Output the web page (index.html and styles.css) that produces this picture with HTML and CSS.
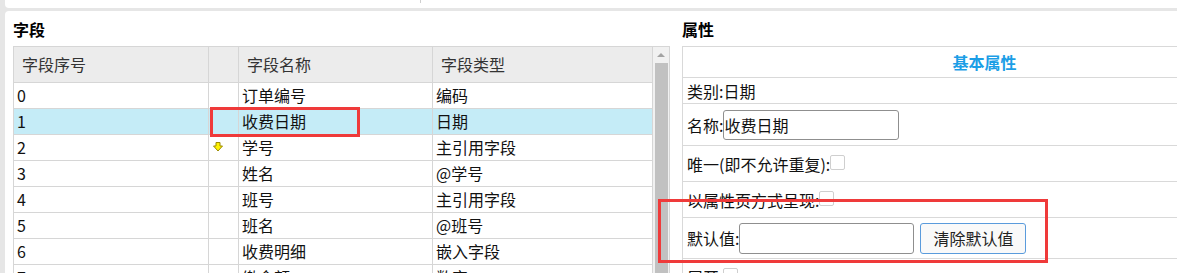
FILE: index.html
```html
<!DOCTYPE html>
<html>

<head>
    <meta charset="utf-8" />
    <title>字段属性</title>
    <meta name="viewport" content="width=device-width, initial-scale=1">
    <link rel="stylesheet" href="styles.css">
</head>

<body>
    <div class="topbar"><span class="topbar-sep"></span></div>

    <div class="main">

        <section class="fields">
            <h2 class="panel-title">字段</h2>
            <div class="grid">
                <div class="grid-body">
                    <div class="row head">
                        <div class="cell">字段序号</div>
                        <div class="cell"></div>
                        <div class="cell">字段名称</div>
                        <div class="cell">字段类型</div>
                    </div>
                    <div class="row">
                        <div class="cell">0</div>
                        <div class="cell"></div>
                        <div class="cell">订单编号</div>
                        <div class="cell">编码</div>
                    </div>
                    <div class="row selected">
                        <div class="cell">1</div>
                        <div class="cell"></div>
                        <div class="cell">收费日期</div>
                        <div class="cell">日期</div>
                    </div>
                    <div class="row">
                        <div class="cell">2</div>
                        <div class="cell icon-cell">
                            <svg width="10" height="10" viewBox="0 0 10 10">
                                <polygon points="3,0.5 7,0.5 7,4 9.5,4 5,9 0.5,4 3,4" fill="#fff200" stroke="#9c8b00" stroke-width="1" />
                            </svg>
                        </div>
                        <div class="cell">学号</div>
                        <div class="cell">主引用字段</div>
                    </div>
                    <div class="row">
                        <div class="cell">3</div>
                        <div class="cell"></div>
                        <div class="cell">姓名</div>
                        <div class="cell">@学号</div>
                    </div>
                    <div class="row">
                        <div class="cell">4</div>
                        <div class="cell"></div>
                        <div class="cell">班号</div>
                        <div class="cell">主引用字段</div>
                    </div>
                    <div class="row">
                        <div class="cell">5</div>
                        <div class="cell"></div>
                        <div class="cell">班名</div>
                        <div class="cell">@班号</div>
                    </div>
                    <div class="row">
                        <div class="cell">6</div>
                        <div class="cell"></div>
                        <div class="cell">收费明细</div>
                        <div class="cell">嵌入字段</div>
                    </div>
                    <div class="row">
                        <div class="cell">7</div>
                        <div class="cell"></div>
                        <div class="cell">缴金额</div>
                        <div class="cell">数字</div>
                    </div>
                </div>
                <div class="vscroll">
                    <span class="vscroll-up"></span>
                    <span class="vscroll-thumb"></span>
                </div>
            </div>
        </section>

        <section class="props">
            <h2 class="panel-title">属性</h2>
            <div class="prop-table">
                <div class="prop-head">基本属性</div>
                <div class="prop-row row-type">类别:日期</div>
                <div class="prop-row row-name">名称:<input class="text-input name-input" type="text" value="收费日期"></div>
                <div class="prop-row row-check">唯一(即不允许重复):<input class="check" type="checkbox"></div>
                <div class="prop-row row-check">以属性页方式呈现:<input class="check" type="checkbox"></div>
                <div class="prop-row row-default">默认值:<input class="text-input default-input" type="text"><button class="clear-btn">清除默认值</button></div>
                <div class="prop-row row-check">展开:<input class="check" type="checkbox"></div>
            </div>
        </section>

        <div class="mark mark-name"></div>
        <div class="mark mark-default"></div>
    </div>
</body>

</html>
```

FILE: styles.css
```css
body {
    margin: 0;
    height: 273px;
    overflow: hidden;
    background: #e6e6e6;
    font-family: "Noto Sans CJK SC", "Noto Sans", sans-serif;
    font-size: 16px;
    color: #111;
}

.topbar {
    height: 8px;
    margin-left: 5px;
    padding-left: 415px;
    background: #fff;
    border-bottom-left-radius: 4px;
}

.topbar-sep {
    display: block;
    width: 1px;
    height: 3px;
    background: #cfcfcf;
}

.main {
    position: relative;
    display: flex;
    gap: 12px;
    margin: 3px 0 0 5px;
    padding: 8px 0 0 8px;
    height: 262px;
    box-sizing: border-box;
    background: #fff;
    border-top-left-radius: 4px;
}

.panel-title {
    margin: 0 0 7px 0;
    font-size: 16px;
    line-height: 20px;
    font-weight: bold;
    color: #000;
}

/* left: field list */

.fields {
    flex: 0 0 657px;
    display: flex;
    flex-direction: column;
}

.grid {
    flex: 1;
    display: flex;
    border: 1px solid #d6d6d6;
    border-bottom: 0;
    overflow: hidden;
}

.grid-body {
    width: 638px;
}

.row {
    display: grid;
    grid-template-columns: 195px 30px 194px 219px;
}

.row.selected {
    background: #c5ecf7;
}

.cell {
    height: 26px;
    line-height: 25px;
    padding: 0 3px;
    box-sizing: border-box;
    border-right: 1px solid #d6d6d6;
    border-bottom: 1px solid #d6d6d6;
    white-space: nowrap;
}

.cell:last-child {
    border-right: 0;
}

.head .cell {
    height: 36px;
    line-height: 35px;
    padding: 0 8px;
    background: #ececec;
    color: #333;
}

.icon-cell {
    padding: 7px 0 0 4px;
    line-height: 0;
}

.vscroll {
    width: 16px;
    border-left: 1px solid #d6d6d6;
    background: #f1f1f1;
    display: flex;
    flex-direction: column;
    align-items: center;
    padding-top: 6px;
}

.vscroll-up {
    width: 0;
    height: 0;
    border-left: 4px solid transparent;
    border-right: 4px solid transparent;
    border-bottom: 4px solid #a3a3a3;
}

.vscroll-thumb {
    flex: 1;
    width: 13px;
    margin-top: 6px;
    background: #c1c1c1;
}

/* right: properties */

.props {
    flex: 0 0 605px;
    display: flex;
    flex-direction: column;
}

.prop-table {
    flex: 1;
    border: 1px solid #d9d9d9;
    border-bottom: 0;
}

.prop-head {
    height: 31px;
    line-height: 30px;
    box-sizing: border-box;
    border-bottom: 1px solid #d9d9d9;
    text-align: center;
    font-weight: bold;
    color: #1c9ee6;
}

.prop-row {
    display: flex;
    align-items: center;
    padding-left: 4px;
    box-sizing: border-box;
    border-bottom: 1px solid #d9d9d9;
    white-space: nowrap;
}

.row-type {
    height: 26px;
}

.row-name {
    height: 42px;
}

.row-check {
    height: 36px;
}

.row-default {
    height: 41px;
}

.text-input {
    height: 30px;
    box-sizing: border-box;
    border: 1px solid #8f8f8f;
    border-radius: 3px;
    padding: 0;
    font-family: inherit;
    font-size: 16px;
    color: #111;
    outline: 0;
}

.name-input {
    width: 176px;
}

.default-input {
    width: 175px;
    height: 31px;
}

.check {
    appearance: none;
    width: 15px;
    height: 15px;
    margin: 0 0 2px 0;
    border: 1px solid #cfcfcf;
    border-radius: 2px;
    background: #fff;
}

.clear-btn {
    width: 106px;
    height: 31px;
    margin-left: 6px;
    border: 1px solid #5a9bdc;
    border-radius: 3px;
    background: #f9f9f9;
    font-family: inherit;
    font-size: 16px;
    color: #222;
    padding: 0;
}

/* red annotation boxes drawn over the screenshot */

.mark {
    position: absolute;
    border: 3px solid #ef3a3a;
    box-sizing: border-box;
}

.mark-name {
    left: 205px;
    top: 96px;
    width: 150px;
    height: 30px;
}

.mark-default {
    left: 653px;
    top: 188px;
    width: 390px;
    height: 64px;
}
```
